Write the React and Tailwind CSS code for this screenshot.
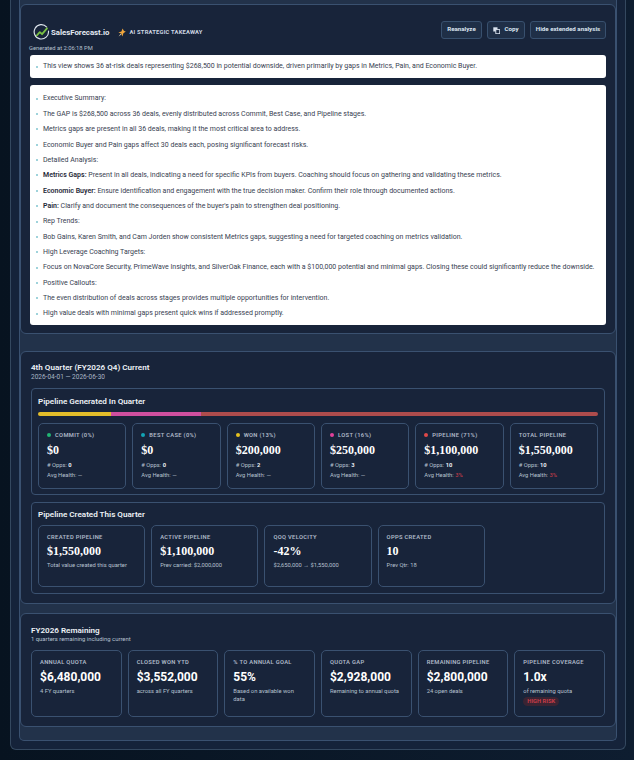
import React from "react";

const sans = "font-['Roboto','Open_Sans',sans-serif]";

const bullets = [
  ["", "Executive Summary:"],
  ["", "The GAP is $268,500 across 36 deals, evenly distributed across Commit, Best Case, and Pipeline stages."],
  ["", "Metrics gaps are present in all 36 deals, making it the most critical area to address."],
  ["", "Economic Buyer and Pain gaps affect 30 deals each, posing significant forecast risks."],
  ["", "Detailed Analysis:"],
  ["Metrics Gaps:", " Present in all deals, indicating a need for specific KPIs from buyers. Coaching should focus on gathering and validating these metrics."],
  ["Economic Buyer:", " Ensure identification and engagement with the true decision maker. Confirm their role through documented actions."],
  ["Pain:", " Clarify and document the consequences of the buyer's pain to strengthen deal positioning."],
  ["", "Rep Trends:"],
  ["", "Bob Gains, Karen Smith, and Cam Jorden show consistent Metrics gaps, suggesting a need for targeted coaching on metrics validation."],
  ["", "High Leverage Coaching Targets:"],
  ["", "Focus on NovaCore Security, PrimeWave Insights, and SilverOak Finance, each with a $100,000 potential and minimal gaps. Closing these could significantly reduce the downside."],
  ["", "Positive Callouts:"],
  ["", "The even distribution of deals across stages provides multiple opportunities for intervention."],
  ["", "High value deals with minimal gaps present quick wins if addressed promptly."],
];

const generated = [
  { label: "COMMIT (0%)", dot: "bg-[#22b573]", value: "$0", opps: "0", health: "—" },
  { label: "BEST CASE (0%)", dot: "bg-[#12a5b5]", value: "$0", opps: "0", health: "—" },
  { label: "WON (13%)", dot: "bg-[#e6c21f]", value: "$200,000", opps: "2", health: "—" },
  { label: "LOST (16%)", dot: "bg-[#e0409a]", value: "$250,000", opps: "3", health: "—" },
  { label: "PIPELINE (71%)", dot: "bg-[#e04848]", value: "$1,100,000", opps: "10", health: "3%" },
  { label: "TOTAL PIPELINE", value: "$1,550,000", opps: "10", health: "3%" },
];

const created = [
  { label: "CREATED PIPELINE", value: "$1,550,000", note: "Total value created this quarter" },
  { label: "ACTIVE PIPELINE", value: "$1,100,000", note: "Prev carried: $2,000,000" },
  { label: "QOQ VELOCITY", value: "-42%", note: "$2,650,000 → $1,550,000" },
  { label: "OPPS CREATED", value: "10", note: "Prev Qtr: 18" },
];

const remaining = [
  { label: "ANNUAL QUOTA", value: "$6,480,000", note: "4 FY quarters" },
  { label: "CLOSED WON YTD", value: "$3,552,000", note: "across all FY quarters" },
  { label: "% TO ANNUAL GOAL", value: "55%", note: "Based on available won data" },
  { label: "QUOTA GAP", value: "$2,928,000", note: "Remaining to annual quota" },
  { label: "REMAINING PIPELINE", value: "$2,800,000", note: "24 open deals" },
  { label: "PIPELINE COVERAGE", value: "1.0x", note: "of remaining quota", badge: "HIGH RISK" },
];

const Logo = () => (
  <svg width="17" height="17" viewBox="0 0 18 18" fill="none">
    <path d="M14.5 3.2A7.6 7.6 0 1 0 16.4 7.5" stroke="#dfe6ee" strokeWidth="1.2" strokeLinecap="round" />
    <path d="M4 12.2 7.2 8.6 9.6 10.8 14.8 4.6" stroke="#7ac143" strokeWidth="1.9" strokeLinecap="round" strokeLinejoin="round" />
  </svg>
);

const Spark = () => (
  <svg width="8" height="9" viewBox="0 0 8 9">
    <path d="M4.6 0.4 6 3.1 7.8 3.6 5.4 5.2 4.4 8.6 3.2 5.6 0.4 4.4 3.4 3.4Z" fill="#f0a63c" />
    <path d="M0.6 8.4 2.6 5.8 3.4 6.6Z" fill="#e8d9b0" />
  </svg>
);

const CopyIcon = () => (
  <svg width="7" height="7" viewBox="0 0 7 7" fill="none">
    <rect x="0.3" y="0.3" width="4.2" height="4.2" fill="#dbe4f0" />
    <rect x="2.8" y="2.6" width="3.9" height="4.1" fill="#1b2a42" stroke="#dbe4f0" strokeWidth="0.9" />
  </svg>
);

const HeaderButton = ({ children, width }) => (
  <button className={`h-[18px] ${width} rounded-[3px] border border-[#38506e] bg-[#1f2f47] text-[6.2px] font-bold text-[#dbe4f0] flex items-center justify-center gap-1`}>
    {children}
  </button>
);

const App = () => {
  return (
    <div className={`h-[760px] w-[634px] overflow-hidden bg-gradient-to-r from-[#071320] to-[#0e1d30] pl-[10px] pr-[8px] ${sans}`}>
      <div className="h-[750px] rounded-b-[6px] border border-t-0 border-[#34485f] bg-[#15233a] px-[8px]">
        <div className="h-[741px] rounded-b-[5px] border border-t-0 border-[#3a5170] bg-[#22324a]">
          <div className="h-[4px]" />

          <section className="h-[330px] rounded-[6px] border border-[#3a5170] bg-[#18243a] px-[9px]">
            <div className="flex h-[50px] items-start justify-between">
              <div>
                <div className="ml-[3px] mt-[18px] flex h-[19px] items-center">
                  <Logo />
                  <span className="ml-[1px] text-[7.8px] font-bold text-[#e4eaf2]">SalesForecast.io</span>
                  <span className="ml-[9px]"><Spark /></span>
                  <span className="ml-[3px] text-[5.8px] font-bold tracking-[0.2px] text-[#cdd6e2]">AI STRATEGIC TAKEAWAY</span>
                </div>
                <div className="-ml-[1px] mt-[2px] text-[5.8px] text-[#b6c1cf]">Generated at 2:06:18 PM</div>
              </div>
              <div className="mt-[16px] flex gap-[5px]">
                <HeaderButton width="w-[41px]">Reanalyze</HeaderButton>
                <HeaderButton width="w-[38px]"><CopyIcon />Copy</HeaderButton>
                <HeaderButton width="w-[76px]">Hide extended analysis</HeaderButton>
              </div>
            </div>

            <div className="flex h-[23px] items-center rounded-[3px] bg-white pl-[6px] text-[7px] text-[#374151]">
              <span className="mr-[5px] h-[2px] w-[2px] rounded-full bg-[#7fc4cf]" />
              This view shows 36 at-risk deals representing $268,500 in potential downside, driven primarily by gaps in Metrics, Pain, and Economic Buyer.
            </div>

            <ul className="mt-[7px] h-[240px] rounded-[3px] bg-white pl-[6px] pt-[6px]">
              {bullets.map(([strong, text], i) => (
                <li key={i} className="flex h-[15.36px] items-center text-[7px] text-[#374151]">
                  <span className="mr-[5px] h-[2px] w-[2px] shrink-0 rounded-full bg-[#7fc4cf]" />
                  <span className="whitespace-nowrap">
                    {strong && <b className="font-semibold text-[#1f2937]">{strong}</b>}
                    {text}
                  </span>
                </li>
              ))}
            </ul>
          </section>

          <section className="mt-[17px] h-[253px] rounded-[6px] border border-[#3a5170] bg-[#18243a] px-[10px] pt-[9px]">
            <h2 className="text-[8.1px] font-semibold leading-[12px] text-[#edf1f6]">4th Quarter (FY2026 Q4) Current</h2>
            <div className="text-[6.5px] leading-[8px] text-[#a9b5c4]">2026-04-01 — 2026-06-30</div>

            <div className="mt-[7px] h-[107px] rounded-[4px] border border-[#3a5170] px-[6px] pt-[6px]">
              <h3 className="text-[8.1px] font-semibold leading-[12px] text-[#edf1f6]">Pipeline Generated In Quarter</h3>
              <div className="mt-[5px] flex h-[4px] overflow-hidden rounded-full">
                <div className="w-[73px] bg-[#e3bd2a]" />
                <div className="w-[90px] bg-[#cf4f9f]" />
                <div className="flex-1 bg-[#ad4c4c]" />
              </div>
              <div className="mt-[7px] grid grid-cols-6 gap-[6px]">
                {generated.map((c) => (
                  <div key={c.label} className="h-[66px] rounded-[5px] border border-[#3a5170] px-[8px] pt-[7px]">
                    <div className="flex h-[8px] items-center text-[5.8px] font-semibold tracking-[0.3px] text-[#aeb9c8]">
                      {c.dot && <span className={`mr-[4px] h-[4px] w-[4px] rounded-full ${c.dot}`} />}
                      {c.label}
                    </div>
                    <div className="mt-[3px] font-['Liberation_Serif',serif] text-[12px] font-bold leading-[16px] text-white">{c.value}</div>
                    <div className="mt-[2px] text-[5.8px] leading-[10px] text-[#b6c1cf]"># Opps: <b className="text-[#e8edf3]">{c.opps}</b></div>
                    <div className="text-[5.8px] leading-[10px] text-[#b6c1cf]">
                      Avg Health: <span className={c.health === "3%" ? "text-[#d13f4a]" : ""}>{c.health}</span>
                    </div>
                  </div>
                ))}
              </div>
            </div>

            <div className="mt-[7px] h-[92px] rounded-[4px] border border-[#3a5170] px-[6px] pt-[5px]">
              <h3 className="text-[8.1px] font-semibold leading-[12px] text-[#edf1f6]">Pipeline Created This Quarter</h3>
              <div className="mt-[5px] grid grid-cols-5 gap-[6px]">
                {created.map((c) => (
                  <div key={c.label} className="h-[62px] rounded-[5px] border border-[#3a5170] px-[8px] pt-[7px]">
                    <div className="text-[5.8px] font-semibold leading-[8px] tracking-[0.3px] text-[#aeb9c8]">{c.label}</div>
                    <div className="mt-[2px] font-['Liberation_Serif',serif] text-[12px] font-bold leading-[16px] text-white">{c.value}</div>
                    <div className="mt-[2px] text-[5.8px] leading-[8px] text-[#b6c1cf]">{c.note}</div>
                  </div>
                ))}
              </div>
            </div>
          </section>

          <section className="mt-[9px] h-[114px] rounded-[6px] border border-[#3a5170] bg-[#18243a] px-[10px] pt-[10px]">
            <h2 className="text-[8.1px] font-semibold leading-[12px] text-[#edf1f6]">FY2026 Remaining</h2>
            <div className="text-[5.9px] leading-[7px] text-[#b6c1cf]">1 quarters remaining including current</div>
            <div className="mt-[7px] grid grid-cols-6 gap-[6px]">
              {remaining.map((c) => (
                <div key={c.label} className="h-[67px] rounded-[5px] border border-[#3a5170] px-[8px] pt-[7px]">
                  <div className="whitespace-nowrap text-[5.8px] font-semibold leading-[8px] tracking-[0.3px] text-[#aeb9c8]">{c.label}</div>
                  <div className="mt-[3px] text-[12px] font-bold leading-[16px] text-white">{c.value}</div>
                  <div className="mt-[2px] text-[5.8px] leading-[8px] text-[#b6c1cf]">{c.note}</div>
                  {c.badge && (
                    <div className="mt-[2px] w-fit rounded-full bg-[#3a2433] px-[4px] text-[5.8px] font-bold leading-[9px] text-[#c93c48]">{c.badge}</div>
                  )}
                </div>
              ))}
            </div>
          </section>
        </div>
      </div>
    </div>
  );
};

export default App;
